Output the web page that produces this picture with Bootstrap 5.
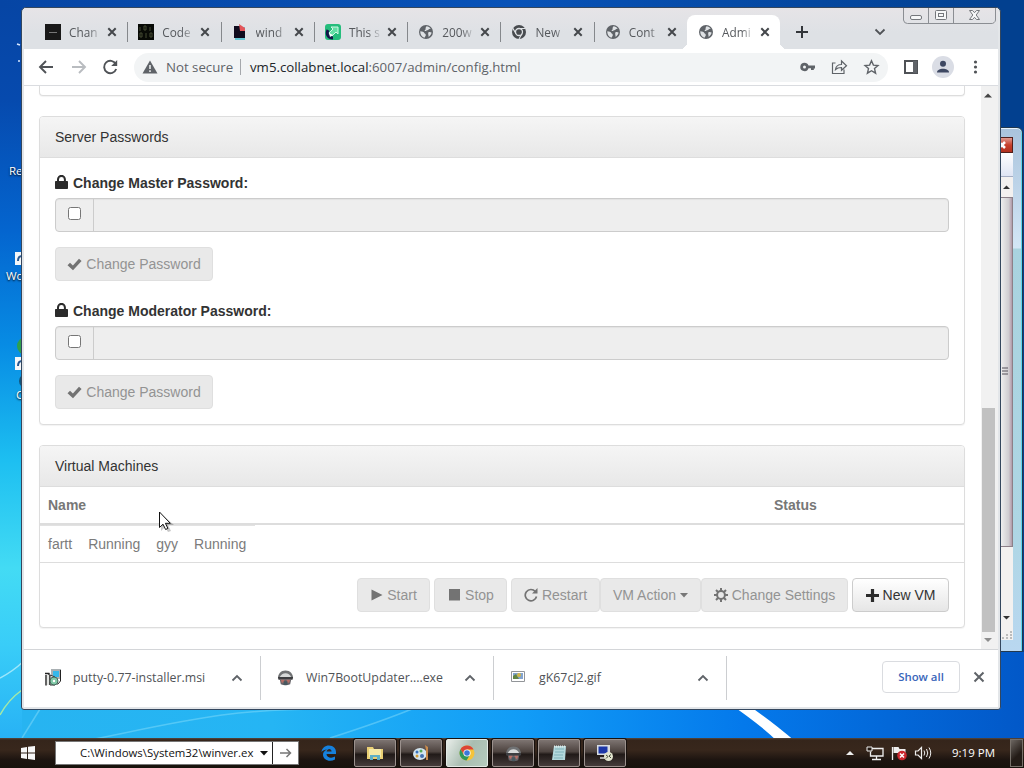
<!DOCTYPE html>
<html lang="en">

<head>
    <meta charset="UTF-8">
    <meta name="viewport" content="width=device-width, initial-scale=1.0">
    <title>Admin Control Panel</title>

    <link href="https://cdn.jsdelivr.net/npm/bootstrap@5.3.0/dist/css/bootstrap.min.css" rel="stylesheet">

    <style>
        body {
            width: 1024px;
            height: 768px;
            overflow: hidden;
            font-family: "Liberation Sans", sans-serif;
            font-size: 14px;
            line-height: 20px;
            color: #333;
        }

        svg {
            display: block;
            flex: none;
        }

        .segoe {
            font-family: "Open Sans", sans-serif;
        }

        /* desktop */
        .wallpaper {
            position: absolute;
            inset: 0;
        }

        .desk-item {
            position: absolute;
            font: 11.5px "Open Sans", sans-serif;
            color: #fff;
            text-shadow: 0 1px 2px #000;
        }

        .desk-recycle {
            left: 9px;
            top: 163px;
        }

        .desk-world {
            left: 6px;
            top: 268px;
        }

        .desk-other {
            left: 16px;
            top: 387px;
        }

        .back-window {
            position: absolute;
            left: 900px;
            top: 127px;
            width: 123px;
            height: 525px;
            background: linear-gradient(#a9c3dc, #d3e6f6 120px, #a9d3df 121px, #aed6e4 400px, #b9d7f0);
            border: 1px solid #22384d;
            border-radius: 6px 6px 0 0;
            padding: 9px 9px 12px 0;
            box-shadow: inset 0 1px 0 #e8f4fc, inset -1px 0 0 #5fd6ee;
        }

        .back-close {
            height: 16px;
            background: linear-gradient(#e09a90, #c8402c 50%, #b0301e);
            border: 1px solid #52201c;
        }

        .back-menu {
            height: 24px;
            background: linear-gradient(#fff, #dfe5f4);
            border-bottom: 1px solid #a5aec4;
        }

        .back-body {
            background: #f3f1f0;
            width: 112px;
            height: 463px;
        }

        .back-thumb {
            width: 12px;
            height: 350px;
            background: linear-gradient(90deg, #eee, #cfcdd1 70%, #b199a9);
            border: 1px solid #8c8088;
            border-left: 0;
        }

        /* browser window */
        .browser {
            position: absolute;
            left: 21px;
            top: 7px;
            width: 980px;
            height: 703px;
            background: #e3e6e9;
            border: 1px solid #34475e;
            border-radius: 5px 5px 3px 3px;
            padding: 0 2px 3px;
            overflow: hidden;
        }

        .tab-strip {
            height: 41px;
            padding: 7px 0 0 10px;
            background: linear-gradient(#e6e4e7, #dee1e5 60%);
        }

        .tab-item {
            width: 93.3px;
            height: 34px;
            padding: 0 0 0 11px;
            position: relative;
            font-size: 11.8px;
            color: #55585c;
        }

        .tab-item + .tab-item::before {
            content: "";
            position: absolute;
            left: 0;
            top: 7px;
            height: 20px;
            border-left: 1px solid #85888c;
        }

        .tab-item.current {
            background: #fff;
            border-radius: 8px 8px 0 0;
        }

        .tab-item.current::before,
        .tab-item.current::after {
            content: "";
            position: absolute;
            left: -7px;
            top: auto;
            bottom: 0;
            width: 7px;
            height: 7px;
            border: 0;
            background: radial-gradient(circle at 0 0, transparent 7px, #fff 7px);
        }

        .tab-item.current::after {
            left: auto;
            right: -7px;
            background: radial-gradient(circle at 100% 0, transparent 7px, #fff 7px);
        }

        .tab-title {
            width: 32px;
            margin: 0 6px 0 8px;
            white-space: nowrap;
            -webkit-mask-image: linear-gradient(90deg, #000 60%, rgba(0, 0, 0, .2) 95%);
            mask-image: linear-gradient(90deg, #000 60%, rgba(0, 0, 0, .2) 95%);
        }

        .caption {
            position: absolute;
            right: 3px;
            top: -1px;
        }

        .toolbar {
            height: 37px;
            background: #fff;
            border-bottom: 1px solid #dadce0;
            padding-left: 14px;
        }

        .omnibox {
            width: 754px;
            height: 29px;
            margin-left: 16px;
            padding: 0 8px 0 8px;
            border-radius: 15px;
            background: #f2f4f5;
            font-size: 13.25px;
            color: #5f6368;
        }

        .secure-note {
            width: 67px;
        }

        .omni-divider {
            width: 1px;
            height: 16px;
            background: #a5a8ac;
            margin: 0 9px 0 7px;
        }

        .viewport-area {
            height: 563px;
            overflow: hidden;
            background: #fff;
        }

        .page-body {
            width: 957px;
            padding: 0 16px 0 15px;
        }

        .scroll-track {
            width: 17px;
            background: #f1f1f1;
            padding: 6px 4px 6px 1px;
        }

        .scroll-thumb {
            height: 224px;
            width: 13px;
            background: #c1c1c1;
        }

        /* admin page */
        .panel-box {
            border: 1px solid #ddd;
            border-radius: 4px;
            background: #fff;
            margin-bottom: 20px;
            box-shadow: 0 1px 1px rgba(0, 0, 0, .05);
        }

        .panel-top {
            height: 10px;
            border-top: 0;
            border-radius: 0 0 4px 4px;
        }

        .panel-head {
            padding: 10px 15px;
            background: linear-gradient(#f5f5f5, #e8e8e8);
            border-bottom: 1px solid #ddd;
            border-radius: 3px 3px 0 0;
        }

        .panel-inner {
            padding: 15px;
        }

        .pw-label {
            font-weight: bold;
            margin-bottom: 5px;
            height: 20px;
            gap: 5px;
        }

        .pw-label svg {
            margin-top: 2px;
        }

        .btn + .pw-label {
            margin-top: 20px;
        }

        .pw-group {
            height: 34px;
            border: 1px solid #ccc;
            border-radius: 4px;
            background: #eee;
            margin-bottom: 15px;
            box-shadow: inset 0 1px 1px rgba(0, 0, 0, .05);
        }

        .pw-addon {
            width: 38px;
            border-right: 1px solid #ccc;
            padding: 8px 0 0 12px;
        }

        .pw-addon input {
            display: block;
            width: 13px;
            height: 13px;
            margin: 0;
        }

        .btn-old {
            --bs-btn-font-size: 14px;
            --bs-btn-line-height: 20px;
            --bs-btn-padding-x: 0;
            --bs-btn-padding-y: 6px;
            --bs-btn-border-radius: 4px;
            --bs-btn-border-color: #ccc;
            --bs-btn-color: #333;
            --bs-btn-disabled-color: #939393;
            --bs-btn-disabled-bg: #e9e9e9;
            --bs-btn-disabled-border-color: #dfdfdf;
            --bs-btn-disabled-opacity: 1;
            display: inline-flex;
            align-items: center;
            justify-content: center;
            height: 34px;
            background-image: linear-gradient(#fff, #e6e6e6);
            white-space: nowrap;
        }

        .btn-old:disabled {
            background-image: none;
        }

        .w-158 { width: 158px; }
        .w-147 { width: 147px; }
        .w-101 { width: 101px; }
        .w-97 { width: 97px; }
        .w-89 { width: 89px; }
        .w-73 { width: 73px; }

        .vm-head {
            height: 38px;
            padding: 8px;
            border-bottom: 2px solid #ddd;
            font-weight: bold;
            color: #777;
        }

        .vm-head span:first-child {
            width: 726px;
        }

        .vm-row {
            height: 38px;
            border-bottom: 1px solid #ddd;
            color: #7b7b7b;
        }

        .vm-cells {
            width: 215px;
            padding: 8px 8px 0;
            gap: 16px;
            border-top: 1px solid #e2e2e2;
        }

        .vm-foot {
            padding: 15px;
        }

        /* downloads */
        .shelf {
            height: 58px;
            background: #fff;
            border-top: 1px solid #d4d6d9;
            padding-bottom: 2px;
            font-size: 12.35px;
            color: #505357;
        }

        .dl-item {
            width: 233px;
            height: 44px;
            border-right: 1px solid #ccced1;
            padding: 0 17px 0 16px;
        }

        .dl-first {
            width: 237px;
            padding-left: 20px;
        }

        .show-all {
            width: 78px;
            height: 32px;
            margin-bottom: 2px;
            border: 1px solid #dadce0;
            border-radius: 4px;
            color: #3a66ba;
            font-size: 11.4px;
            font-weight: 600;
        }

        .shelf-close {
            margin: 0 13px 2px 13px;
        }

        /* taskbar */
        .taskbar {
            position: absolute;
            left: 0;
            right: 0;
            bottom: 0;
            height: 30px;
            background: linear-gradient(#57483f 0, #35251b 2px, #38271c 12px, #1c1410 22px, #17120c);
            color: #fff;
        }

        .start-logo {
            margin-left: 21px;
        }

        .run-box {
            width: 244px;
            height: 24px;
            margin-left: 20px;
            background: #fff;
            border: 1px solid #777;
            color: #111;
            font-size: 11.4px;
        }

        .run-text {
            width: 178px;
            margin-left: 24px;
            white-space: nowrap;
        }

        .run-caret {
            margin: 0 4px 0 3px;
        }

        .run-go {
            width: 26px;
            height: 22px;
            border-left: 1px solid #222;
        }

        .edge-icon {
            margin: 0 17px 0 22px;
        }

        .task-list {
            gap: 4px;
        }

        .task-btn {
            width: 42px;
            height: 28px;
            border: 1px solid #9b918d;
            border-radius: 2px;
            background: linear-gradient(#7d7471, #4d433f 45%, #211a18 55%, #443b3a);
            box-shadow: 0 0 0 1px #17110e;
        }

        .task-btn.running {
            background: linear-gradient(120deg, #e8ede9, #a9bdb1 50%, #b5cbbd);
            border-color: #e3eae5;
        }

        .clock {
            font-size: 11.5px;
            width: 48px;
            margin-left: 18px;
            white-space: nowrap;
        }

        .peek {
            width: 13px;
            height: 28px;
            margin-left: 10px;
            margin-right: 1px;
            border: 1px solid #777069;
            background: linear-gradient(135deg, #6c6661, #241c17 60%);
        }

        .pointer {
            position: absolute;
            left: 158px;
            top: 511px;
        }
    </style>
</head>

<body>
    <svg width="0" height="0" class="position-absolute">
        <symbol id="i-x" viewBox="0 0 10 10"><path d="M1.3 1.3l7.4 7.4M8.7 1.3L1.3 8.7" stroke="#45484c" stroke-width="2" fill="none"/></symbol>
        <symbol id="i-globe" viewBox="0 0 16 16">
            <circle cx="8" cy="8" r="7" fill="#5f6368"/>
            <path d="M2.3 7.2c2 .2 3.6.6 4 1.9.3 1 1.5.6 1.5 1.8 0 1-.8 1.2-.9 2.7C4.2 13.2 2.2 10.900 2.300 7.200zM8.600 2.300c1.500.1 3.200 1 4.100 2.500l-1.800.2c-.4 1.200-1.300 1.200-2.200 1.200-.3.800-.9 1-1.900.9-.5-.9.200-1.300.9-1.700-.3-1.200-.1-2.100.9-3.100zM10.400 8.300c1.200-.6 2.200-.3 3.200.3-.4 2-1.500 3.500-3 4.300.2-1.600-.900-2.800-.2-4.600z" fill="#dfe2e5"/>
        </symbol>
        <symbol id="i-lock" viewBox="0 0 13 14"><path fill-rule="evenodd" d="M2 6V4.300a4.300 4.300 0 0 1 8.900 0V6H12c.6 0 1 .4 1 1v6c0 .6-.4 1-1 1H1c-.6 0-1-.4-1-1V7c0-.6.400-1 1-1zM4 6h4.900V4.400a2.450 2.400 0 0 0-4.900 0z" fill="#2b2b2b"/></symbol>
        <symbol id="i-check" viewBox="0 0 15 13"><path d="M.5 7.200L3 4.700l2.900 2.700L12 .7l2.600 2.300L6 12.300z" fill="#737373"/></symbol>
        <symbol id="i-up" viewBox="0 0 12 8"><path d="M1.500 6.500L6 2l4.500 4.500" stroke="#5f6368" stroke-width="1.8" fill="none"/></symbol>
        <symbol id="i-helmet" viewBox="0 0 18 18">
            <path d="M1 10C1 5 4 1.500 9 1.500S17 5 17 10z" fill="#707274"/>
            <path d="M3 8.500C5 3 13 3 15 8.500z" fill="#d6d8d8"/>
            <path d="M1 8.500h16l-.6 3H1.600z" fill="#3c3d40"/>
            <path d="M3 11h12l-1 5.200c-3 1.500-7 1.500-10 0z" fill="#676469"/>
            <path d="M4 11.500h4l-1 3H5zM10 11.500h4l-1 3h-2z" fill="#b66e66"/>
            <path d="M7 13h4v4H7z" fill="#48585f"/>
        </symbol>
    </svg>

    <!-- wallpaper -->
    <svg class="wallpaper" width="1024" height="768">
        <defs>
            <linearGradient id="wpLeft" x1="0" y1="0" x2="0" y2="1">
                <stop offset="0" stop-color="#0645a4"/>
                <stop offset=".13" stop-color="#064aae"/>
                <stop offset=".3" stop-color="#0465cf"/>
                <stop offset=".45" stop-color="#078ce4"/>
                <stop offset=".6" stop-color="#1dbff1"/>
                <stop offset=".74" stop-color="#43dbf4"/>
                <stop offset=".84" stop-color="#39cdf8"/>
                <stop offset="1" stop-color="#22a9f4"/>
            </linearGradient>
            <linearGradient id="wpTop">
                <stop offset="0" stop-color="#0645a4"/>
                <stop offset=".5" stop-color="#0752b8"/>
                <stop offset="1" stop-color="#02408f"/>
            </linearGradient>
            <linearGradient id="wpBottom">
                <stop offset="0" stop-color="#27b4f1"/>
                <stop offset=".25" stop-color="#25b5f4"/>
                <stop offset=".5" stop-color="#119cf7"/>
                <stop offset=".72" stop-color="#0479eb"/>
                <stop offset="1" stop-color="#0258c8"/>
            </linearGradient>
        </defs>
        <rect width="1024" height="768" fill="url(#wpLeft)"/>
        <rect width="1024" height="8" fill="url(#wpTop)"/>
        <rect x="990" width="34" height="652" fill="#02408f"/>
        <rect x="22" y="652" width="1002" height="90" fill="url(#wpBottom)"/>
        <path d="M0 678Q12 672 24 661" stroke="#b8effb" stroke-width="1.500" fill="none" opacity=".8"/>
        <path d="M0 715Q8 700 22 690" stroke="#a3e9a8" stroke-width="1.500" fill="none"/>
        <path d="M90 740C180 722 230 708 330 709M330 738Q380 722 412 709M22 738L40 709" stroke="#8fe0fb" stroke-width="1.500" fill="none" opacity=".45"/>
        <path d="M730 704H746Q768 718 796 742H778Q762 726 730 704z" fill="#fff"/>
        <path d="M17 44l3 1M18 61h2" stroke="#d9e9ff" stroke-width="1.500"/>
        <circle cx="26" cy="346" r="9" fill="#2fa04c"/>
        <circle cx="26" cy="381" r="7" fill="#12557c"/>
        <path d="M15 252h8v13h-8zM15 357h8v13h-8z" fill="#f4f7f9"/>
        <path d="M22 256c-3 0-4 2-4 5M22 361c-3 0-4 2-4 5" stroke="#275891" stroke-width="2" fill="none"/>
    </svg>
    <div class="desk-item desk-recycle">Re</div>
    <div class="desk-item desk-world">Wo</div>
    <div class="desk-item desk-other">C</div>

    <!-- window behind -->
    <div class="back-window">
        <div class="back-close"><svg width="112" height="14"><path d="M97 4l6 6M103 4l-6 6" stroke="#fff" stroke-width="2.500"/></svg></div>
        <div class="back-menu"></div>
        <div class="back-body d-flex flex-column align-items-end">
            <svg width="12" height="20"><path d="M2 12l3.500-3.500L9 12z" fill="#333"/></svg>
            <div class="back-thumb d-flex align-items-center"><svg width="10" height="10"><path d="M1 1h6M1 4h6M1 7h6" stroke="#55505a"/></svg></div>
            <svg width="12" height="93"><path d="M2 69h7l-3.500 3.500z" fill="#333"/><path d="M9 85h2M9 88h2M5 88h2M9 91h2M5 91h2M1 91h2" stroke="#aaa" stroke-width="1.500"/></svg>
        </div>
    </div>

    <div class="browser">
        <div class="tab-strip segoe d-flex">
            <div class="tab-item d-flex align-items-center">
                <svg width="16" height="16"><rect width="16" height="16" fill="#191919"/><path d="M4 8.500h8" stroke="#777"/></svg>
                <span class="tab-title">Chan</span><svg width="10" height="10"><use href="#i-x"/></svg>
            </div>
            <div class="tab-item d-flex align-items-center">
                <svg width="16" height="16"><rect width="16" height="16" fill="#080a06"/><path d="M2 3v4M6 2h2v4H6zM12 3v4M2 9h2v4H2zM8 9v5M12 9h2v4h-2z" stroke="#454a32" fill="none"/></svg>
                <span class="tab-title">Code</span><svg width="10" height="10"><use href="#i-x"/></svg>
            </div>
            <div class="tab-item d-flex align-items-center">
                <svg width="16" height="16"><path d="M3 3h10v13H3z" fill="#65c6d4"/><path d="M2 2h6l5 5v7H2z" fill="#100b1e"/><path d="M7 0l6 4v3H8z" fill="#e4555a"/></svg>
                <span class="tab-title">wind</span><svg width="10" height="10"><use href="#i-x"/></svg>
            </div>
            <div class="tab-item d-flex align-items-center">
                <svg width="16" height="16"><rect width="16" height="16" rx="3" fill="#25bd7c"/><path d="M6 3h7v7l-2-2-4 4-3-3 4-4z" fill="#62dfa4" stroke="#d2f7e6"/><path d="M3 6c-2 4 0 8 5 8" stroke="#151449" stroke-width="3" fill="none"/><path d="M4 9l4 2-3 2z" fill="#fff"/></svg>
                <span class="tab-title">This s</span><svg width="10" height="10"><use href="#i-x"/></svg>
            </div>
            <div class="tab-item d-flex align-items-center">
                <svg width="16" height="16"><use href="#i-globe"/></svg>
                <span class="tab-title">200w</span><svg width="10" height="10"><use href="#i-x"/></svg>
            </div>
            <div class="tab-item d-flex align-items-center">
                <svg width="16" height="16"><circle cx="8" cy="8" r="7" fill="#484b4f"/><circle cx="8" cy="8" r="3.500" fill="none" stroke="#dfe2e5" stroke-width="1.300"/><path d="M8 4.500h6.300M5 9.700L1.900 4.400M11 9.800L8 15" stroke="#dfe2e5" stroke-width="1.100"/></svg>
                <span class="tab-title">New</span><svg width="10" height="10"><use href="#i-x"/></svg>
            </div>
            <div class="tab-item d-flex align-items-center">
                <svg width="16" height="16"><use href="#i-globe"/></svg>
                <span class="tab-title">Cont</span><svg width="10" height="10"><use href="#i-x"/></svg>
            </div>
            <div class="tab-item current d-flex align-items-center">
                <svg width="16" height="16"><use href="#i-globe"/></svg>
                <span class="tab-title">Admi</span><svg width="10" height="10"><use href="#i-x"/></svg>
            </div>
            <svg width="120" height="34"><path d="M16 17h12M22 11v12" stroke="#33363a" stroke-width="2"/><path d="M95.500 14.500l4.500 4.500 4.500-4.500" stroke="#505357" stroke-width="1.800" fill="none"/></svg>
        </div>
        <div class="caption">
            <svg width="94" height="18" fill="none" stroke="#74777c">
                <path d="M.5 0v13a4 4 0 0 0 4 3.500H88a4 4 0 0 0 4.500-3.500V0M25.500 0v16.500M50.500 0v16.500" stroke="#8b8e93"/>
                <rect x="7.500" y="8.500" width="11" height="4" rx="1.500" fill="#f6f7f8"/>
                <rect x="32.500" y="3.500" width="11" height="9" rx="1" fill="#f6f7f8"/><rect x="35.500" y="6.500" width="5" height="3"/>
                <path d="M66.500 3.500h3l2 2.200 2-2.200h3l-3.300 4.500 3.300 4.500h-3l-2-2.200-2 2.200h-3l3.300-4.500z" fill="#f6f7f8"/>
            </svg>
        </div>

        <div class="toolbar segoe d-flex align-items-center">
            <svg width="80" height="18" fill="none" stroke="#505357" stroke-width="1.900">
                <path d="M15 9H2.500M8 3L2 9l6 6"/>
                <path d="M34 9h12.500M41 3l6 6-6 6" stroke="#b9bcc0"/>
                <path d="M77.800 6A6.200 6.200 0 1 0 78.200 11"/><path d="M79.200 2v6h-6z" fill="#505357" stroke="none"/>
            </svg>
            <div class="omnibox d-flex align-items-center">
                <svg width="16" height="16"><path d="M8 1.500L15.500 14.500H.5z" fill="#5f6368"/><path d="M8 6v4M8 11.300v1.700" stroke="#f2f4f5" stroke-width="1.500"/></svg>
                <span class="secure-note ms-2 text-nowrap">Not secure</span>
                <span class="omni-divider"></span>
                <span class="text-nowrap me-auto"><span class="text-dark">vm5.collabnet.local</span>:6007/admin/config.html</span>
                <svg width="80" height="18">
                    <path fill-rule="evenodd" d="M4.500 4.800a4.200 4.200 0 0 1 4 2.800H15v3h-1.200V12H11v-1.700H8.500A4.200 4.200 0 1 1 4.500 4.800zm0 2.700a1.500 1.500 0 1 0 0 3 1.500 1.500 0 0 0 0-3z" fill="#5f6368"/>
                    <path d="M35.500 5h-3v10.500h11.500v-4M35.500 11.500c.5-3.500 2.500-5 6-5V3l5 4.700-5 4.600V9.500c-3 0-4.500.5-6 2z" fill="none" stroke="#5f6368" stroke-width="1.200"/>
                    <path d="M72 2.300l1.900 4.300 4.600.4-3.500 3.100 1.100 4.600-4.100-2.500-4.100 2.500L69 10.100 65.500 7l4.600-.4z" transform="translate(-.5 .5)" fill="none" stroke="#5f6368" stroke-width="1.400"/>
                </svg>
            </div>
            <svg width="90" height="24" class="ms-3">
                <rect x="1" y="6" width="12" height="12" fill="none" stroke="#4f5256" stroke-width="2"/><path d="M9 6h4v12H9z" fill="#5f6368"/>
                <circle cx="39" cy="12" r="11" fill="#dadde5"/><circle cx="39" cy="8.800" r="3" fill="#3e4862"/><path d="M33 17.500c0-5 12-5 12 0z" fill="#3e4862"/>
                <g fill="#505357"><circle cx="71.500" cy="7" r="1.600"/><circle cx="71.500" cy="12" r="1.600"/><circle cx="71.500" cy="17" r="1.600"/></g>
            </svg>
        </div>

        <div class="viewport-area d-flex">
            <div class="page-body">
                <div class="panel-box panel-top"></div>

                <div class="panel-box">
                    <div class="panel-head">Server Passwords</div>
                    <div class="panel-inner">
                        <div class="pw-label d-flex"><svg width="13" height="14"><use href="#i-lock"/></svg><span>Change Master Password:</span></div>
                        <div class="pw-group d-flex"><div class="pw-addon"><input type="checkbox"></div></div>
                        <button class="btn btn-old w-158" disabled><svg width="15" height="13" class="me-1"><use href="#i-check"/></svg>Change Password</button>
                        <div class="pw-label d-flex"><svg width="13" height="14"><use href="#i-lock"/></svg><span>Change Moderator Password:</span></div>
                        <div class="pw-group d-flex"><div class="pw-addon"><input type="checkbox"></div></div>
                        <button class="btn btn-old w-158" disabled><svg width="15" height="13" class="me-1"><use href="#i-check"/></svg>Change Password</button>
                    </div>
                </div>

                <div class="panel-box">
                    <div class="panel-head">Virtual Machines</div>
                    <div class="vm-head d-flex"><span>Name</span><span>Status</span></div>
                    <div class="vm-row">
                        <div class="vm-cells d-flex"><span>fartt</span><span>Running</span><span>gyy</span><span>Running</span></div>
                    </div>
                    <div class="vm-foot d-flex justify-content-end">
                        <button class="btn btn-old w-73 me-1" disabled><svg width="13" height="14" class="me-1"><path d="M1.500 1.500l11 5.500-11 5.500z" fill="#737373"/></svg>Start</button>
                        <button class="btn btn-old w-73 me-1" disabled><svg width="14" height="12" class="me-1"><path d="M2 0h11v11.500H2z" fill="#737373"/></svg>Stop</button>
                        <button class="btn btn-old w-89" disabled><svg width="14" height="14" class="me-1"><path d="M11.300 3.500A5.700 5.700 0 1 0 12.500 8.500" stroke="#737373" stroke-width="1.700" fill="none"/><path d="M13.500 0v5.500H8z" fill="#737373"/></svg>Restart</button>
                        <button class="btn btn-old w-101" disabled>VM Action<svg width="8" height="5" class="ms-1"><path d="M0 0h8L4 4.500z" fill="#777"/></svg></button>
                        <button class="btn btn-old w-147 me-1" disabled>
                            <svg width="14" height="14" class="me-1"><g stroke="#737373" fill="none"><circle cx="7" cy="7" r="3.900" stroke-width="2"/><path d="M7 0v3M7 11v3M0 7h3M11 7h3M2 2l2 2M10 10l2 2M12 2l-2 2M4 10l-2 2" stroke-width="2"/></g></svg>Change Settings</button>
                        <button class="btn btn-old w-97"><svg width="13" height="13" class="me-1"><path d="M6.500 0v13M0 6.500h13" stroke="#2c2c2c" stroke-width="3.200"/></svg>New VM</button>
                    </div>
                </div>
            </div>
            <div class="scroll-track d-flex flex-column justify-content-between">
                <svg width="13" height="6"><path d="M2 5.500L6 1.500l4 4z" fill="#444"/></svg>
                <div class="mt-auto scroll-thumb"></div>
                <svg width="13" height="11"><path d="M2 6h8L6 10z" fill="#8d8d8d"/></svg>
            </div>
        </div>

        <div class="shelf segoe d-flex align-items-center">
            <div class="dl-item dl-first d-flex align-items-center">
                <svg width="17" height="17"><path d="M7 0h10v10H7z" fill="#a9b0b3"/><path d="M9 2h6v6H9z" fill="#34b8ea"/><path d="M1 4.500h4.500M2 6v10.500M5 4v12" stroke="#222" stroke-width="1.400"/><path d="M3 6h2v10H3z" fill="#e5e7e4"/><path d="M6 6l5 2v8H6z" fill="#e9ebe8" stroke="#333"/><circle cx="10" cy="12" r="4" fill="#81c9a7" stroke="#47685c"/><circle cx="10" cy="12" r="1.200" fill="#fff"/><path d="M16.500 1v11l-3 3.500" stroke="#222" fill="none"/></svg>
                <span class="ms-2 ps-1 me-auto">putty-0.77-installer.msi</span><svg width="12" height="8"><use href="#i-up"/></svg>
            </div>
            <div class="dl-item d-flex align-items-center">
                <svg width="17" height="17"><use href="#i-helmet"/></svg>
                <span class="ms-2 ps-1 me-auto">Win7BootUpdater....exe</span><svg width="12" height="8"><use href="#i-up"/></svg>
            </div>
            <div class="dl-item d-flex align-items-center">
                <svg width="17" height="17"><path d="M1.500 2.500h13v10h-13z" fill="#fff" stroke="#929599"/><path d="M3 4h10v6H3z" fill="#83a4d0"/><path d="M3 10V7l3-2 3 5z" fill="#628443"/><circle cx="9" cy="6" r="2" fill="#d2b544"/></svg>
                <span class="ms-2 ps-1 me-auto">gK67cJ2.gif</span><svg width="12" height="8"><use href="#i-up"/></svg>
            </div>
            <div class="show-all d-flex align-items-center justify-content-center ms-auto">Show all</div>
            <svg width="12" height="12" class="shelf-close"><path d="M1.500 1.500l9 9M10.500 1.500l-9 9" stroke="#5f6368" stroke-width="2"/></svg>
        </div>
    </div>

    <svg class="pointer" width="18" height="22"><path d="M3 3v17l4-4 3 5 3-1-3-6h6z" fill="#000" opacity=".22"/><path d="M1.500 1v15.500l3.500-3.300 2.600 5.300 2.300-1.100-2.500-5.100h4.900z" fill="#fff" stroke="#111"/></svg>

    <div class="taskbar segoe d-flex align-items-center">
        <svg width="14" height="14" class="start-logo"><path d="M0 2l6-1v5.500H0zM7 .8L14 0v6.500H7zM0 7.500h6V13l-6-1zM7 7.500h7V14l-7-1z" fill="#f7f7f7"/></svg>
        <div class="run-box d-flex align-items-center">
            <span class="run-text">C:\Windows\System32\winver.ex</span>
            <svg width="8" height="5" class="run-caret"><path d="M0 0h8L4 4.500z" fill="#111"/></svg>
            <div class="run-go d-flex align-items-center justify-content-center"><svg width="12" height="10"><path d="M0 5h10.500M6.500 1l4 4-4 4" stroke="#777" stroke-width="1.500" fill="none"/></svg></div>
        </div>
        <svg width="16" height="16" viewBox="0 0 16 16" class="edge-icon"><path d="M.5 7C1 3 4 .5 8 .5c4.500 0 7 3 7 6.500v2H5.500c.2 4 5.500 4.500 8.500 2.500v3C8.500 17.500 2 15 2 9.500 2 7.500 3.500 5.500 6 4.500c-2.500.2-4.500 1-5.500 2.500zM5.600 6.500h5c0-3.400-4.500-3.300-5 0z" fill="#1681dd" fill-rule="evenodd"/></svg>
        <div class="task-list d-flex">
            <div class="task-btn d-flex align-items-center justify-content-center"><svg width="18" height="18"><path d="M1 3h6l1 2h9v10H1z" fill="#e9cf73"/><path d="M3 5h12v8H3z" fill="#f6e9a6"/><path d="M4 11h10v5h-3v-3H7v3H4z" fill="#5eafc6"/></svg></div>
            <div class="task-btn d-flex align-items-center justify-content-center"><svg width="18" height="18"><ellipse cx="8" cy="10" rx="7" ry="6" fill="#d3e5f0"/><circle cx="5" cy="8" r="1.500" fill="#3b74bd"/><circle cx="9" cy="7" r="1.500" fill="#52a853"/><circle cx="5" cy="12" r="1.500" fill="#d49b34"/><circle cx="10" cy="12" r="2" fill="#4471b0"/><path d="M14 16V6l-1-5 3 2v13z" fill="#c98b4c"/></svg></div>
            <div class="task-btn running d-flex align-items-center justify-content-center"><svg width="16" height="16"><circle cx="8" cy="8" r="7.500" fill="#f4c33a"/><path d="M1.500 4.300A7.500 7.500 0 0 1 14.600 4.500H8L4.800 9.800z" fill="#dc4535"/><path d="M1.500 4.300A7.500 7.500 0 0 0 7.500 15.500L11 9.800 4.800 9.800z" fill="#30985a"/><circle cx="8" cy="8" r="3.600" fill="#fff"/><circle cx="8" cy="8" r="2.800" fill="#3b78d8"/></svg></div>
            <div class="task-btn d-flex align-items-center justify-content-center"><svg width="17" height="17"><use href="#i-helmet"/></svg></div>
            <div class="task-btn d-flex align-items-center justify-content-center"><svg width="18" height="18"><path d="M4 2h12l-1 14H2z" fill="#b3d8dc"/><path d="M5 5h9M5 8h9M4 11h9M4 14h9" stroke="#7fb1b9"/><path d="M4 2.500h12" stroke="#dfe9e9" stroke-width="2" stroke-dasharray="1 1"/></svg></div>
            <div class="task-btn d-flex align-items-center justify-content-center"><svg width="18" height="18"><path d="M1 1h13v10H1z" fill="#d8dde2"/><path d="M2.500 2.500h9v7h-9z" fill="#1d37a7"/><path d="M4 13h6v2H4z" fill="#aaa"/><circle cx="12.500" cy="12.500" r="4.500" fill="#e2e5cf"/><path d="M10 11l2 1.500-2 2M15 10.500L13 12l2 2" stroke="#454c3c" fill="none"/></svg></div>
        </div>
        <svg width="88" height="16" class="ms-auto">
            <path d="M0 10l4-4 4 4z" fill="#eee"/>
            <path d="M25 3.500h12v7.500H24.500V6.500M30.500 11v3M26 14.500h9" stroke="#eee" stroke-width="1.300" fill="none"/><path d="M21 2h5v4h-5z" fill="#241a14" stroke="#eee"/>
            <path d="M46.500 2v13" stroke="#eee" stroke-width="1.300"/><path d="M47.500 2h5l1 2h6v6h-5l-1-2h-6z" fill="#eee"/><circle cx="56" cy="10.500" r="4.800" fill="#c9262d"/><path d="M54 8.500l4 4M58 8.500l-4 4" stroke="#fff" stroke-width="1.500"/>
            <path d="M69.500 6h2.500l3.500-3.500v11L72 10h-2.500z" fill="none" stroke="#eee" stroke-width="1.200"/><path d="M78 5.500q1.500 2.500 0 5M80.500 4q2.500 4 0 8M83 2.500q3.500 5.500 0 11" stroke="#eee" fill="none"/>
        </svg>
        <div class="clock">9:19 PM</div>
        <div class="peek"></div>
    </div>

    <script src="https://cdn.jsdelivr.net/npm/bootstrap@5.3.0/dist/js/bootstrap.bundle.min.js"></script>
</body>

</html>
